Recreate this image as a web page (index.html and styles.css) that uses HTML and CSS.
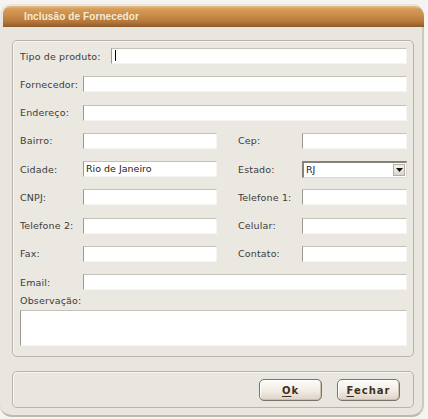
FILE: index.html
```html
<!DOCTYPE html>
<html>
<head>
<meta charset="utf-8">
<link rel="stylesheet" href="styles.css">
</head>
<body>
<div class="window">
  <div class="titlebar"><span class="title">Inclusão de Fornecedor</span></div>
  <div class="group">
    <div class="row">
      <span class="label label-wide">Tipo de produto:</span>
      <div class="field grow"><span class="caret"></span></div>
    </div>
    <div class="row">
      <span class="label">Fornecedor:</span>
      <div class="field grow"></div>
    </div>
    <div class="row">
      <span class="label">Endereço:</span>
      <div class="field grow"></div>
    </div>
    <div class="row">
      <span class="label">Bairro:</span>
      <div class="field half"></div>
      <span class="label label-right">Cep:</span>
      <div class="field grow"></div>
    </div>
    <div class="row">
      <span class="label">Cidade:</span>
      <div class="field half">Rio de Janeiro</div>
      <span class="label label-right">Estado:</span>
      <div class="select grow"><span class="select-text">RJ</span><span class="select-btn"><svg width="7" height="4" viewBox="0 0 7 4"><path d="M0 0H7L3.5 4Z" fill="#111"/></svg></span></div>
    </div>
    <div class="row">
      <span class="label">CNPJ:</span>
      <div class="field half"></div>
      <span class="label label-right">Telefone 1:</span>
      <div class="field grow"></div>
    </div>
    <div class="row">
      <span class="label">Telefone 2:</span>
      <div class="field half"></div>
      <span class="label label-right">Celular:</span>
      <div class="field grow"></div>
    </div>
    <div class="row">
      <span class="label">Fax:</span>
      <div class="field half"></div>
      <span class="label label-right">Contato:</span>
      <div class="field grow"></div>
    </div>
    <div class="row">
      <span class="label">Email:</span>
      <div class="field grow"></div>
    </div>
    <div class="obs-label">Observação:</div>
    <div class="field textarea"></div>
  </div>
  <div class="buttons">
    <button class="btn"><u>O</u>k</button>
    <button class="btn"><u>F</u>echar</button>
  </div>
</div>
</body>
</html>
```

FILE: styles.css
```css
html, body {
  margin: 0;
  padding: 0;
  background: #f5f4f1;
}
body {
  width: 428px;
  height: 419px;
  overflow: hidden;
  font-family: "DejaVu Sans", Verdana, sans-serif;
  font-size: 9.5px;
  color: #333;
}
.window {
  box-sizing: border-box;
  width: 424px;
  height: 413px;
  margin-top: 4px;
  padding: 2px 0 0 3px;
  background: #e9e6df;
  border-radius: 10px 12px 12px 12px;
  border-right: 2px solid #cdc9c1;
  border-bottom: 2px solid #bdb9b0;
}
.titlebar {
  height: 21px;
  margin-right: -2px;
  border-radius: 8px 10px 0 0;
  background: linear-gradient(#e7c08b 0px, #d59c5a 3px, #c98a46 10px, #b4773a 16px, #8c5a2a 21px);
  display: flex;
  align-items: center;
  padding-left: 21px;
}
.title {
  font-family: "Liberation Sans", Arial, sans-serif;
  font-weight: bold;
  font-size: 10px;
  color: #f6ead4;
  letter-spacing: 0.1px;
}
.group {
  box-sizing: border-box;
  width: 402px;
  height: 317px;
  margin: 13px 0 0 9px;
  border: 1px solid #b8b4ab;
  border-radius: 5px;
  box-shadow: inset 1px 1px 0 #f7f6f2;
  background: #ebe8e2;
  padding: 7px 6px 0 7px;
  display: flex;
  flex-direction: column;
}
.row {
  display: flex;
  align-items: center;
  height: 16px;
  margin-bottom: 12.25px;
}
.label {
  width: 63px;
  flex: none;
  white-space: nowrap;
  color: #3d3b38;
  letter-spacing: 0.15px;
}
.label-wide {
  width: 91px;
}
.label-right {
  width: 64px;
  margin-left: 21px;
}
.field {
  box-sizing: border-box;
  height: 16px;
  background: #fff;
  border-top: 1px solid #c4c1b9;
  border-left: 1px solid #9c9992;
  border-right: 1px solid #f5f4f0;
  border-bottom: 1px solid #f5f4f0;
  padding-left: 2px;
  line-height: 14px;
  color: #222;
  white-space: nowrap;
  overflow: hidden;
}
.grow {
  flex: 1;
}
.half {
  width: 134px;
  flex: none;
}
.caret {
  display: inline-block;
  width: 1px;
  height: 11px;
  margin: 1px 0 0 1px;
  background: #000;
  vertical-align: top;
}
.select {
  box-sizing: border-box;
  height: 17px;
  background: #fff;
  border-top: 2px solid #85827b;
  border-left: 2px solid #85827b;
  border-right: 1px solid #dcd9d2;
  border-bottom: 1px solid #dcd9d2;
  display: flex;
  align-items: center;
  justify-content: space-between;
  padding-left: 2px;
  color: #222;
}
.select-text {
  line-height: 14px;
}
.select-btn {
  box-sizing: border-box;
  width: 12px;
  height: 12px;
  margin-right: 1px;
  background: linear-gradient(#f4f2ee, #d9d6ce);
  border: 1px solid #b2aea6;
  display: flex;
  align-items: center;
  justify-content: center;
}
.obs-label {
  margin-top: -8px;
  height: 13px;
  line-height: 13px;
  color: #3d3b38;
  letter-spacing: 0.15px;
}
.textarea {
  height: 36px;
  margin-top: 3px;
}
.buttons {
  box-sizing: border-box;
  width: 402px;
  height: 37px;
  margin: 14px 0 0 9px;
  border: 1px solid #b8b4ab;
  border-radius: 5px;
  box-shadow: inset 1px 1px 0 #f7f6f2;
  background: #e9e6e0;
  display: flex;
  align-items: center;
  justify-content: flex-end;
  gap: 15px;
  padding-right: 13px;
}
.btn {
  box-sizing: border-box;
  width: 63px;
  height: 22px;
  border: 1px solid #7c7368;
  border-radius: 5px;
  background: linear-gradient(#fdfcfa 0%, #f3eee6 50%, #ddd2c4 100%);
  box-shadow: inset -1px -1px 0 #cbbfae, inset 1px 1px 0 #ffffff;
  font-family: "DejaVu Sans", Verdana, sans-serif;
  font-weight: bold;
  font-size: 10px;
  letter-spacing: 1px;
  color: #3d3023;
  padding: 0;
  margin-top: 1px;
}
.btn u {
  text-decoration-thickness: 1px;
  text-underline-offset: 2px;
}
```
